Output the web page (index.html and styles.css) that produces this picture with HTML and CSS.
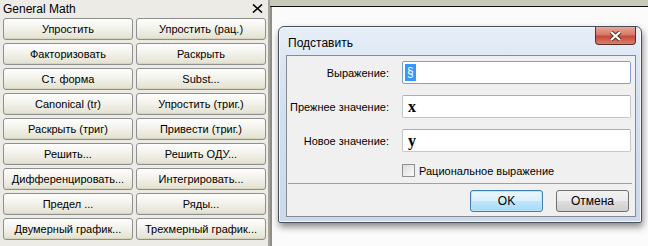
FILE: index.html
```html
<!DOCTYPE html>
<html lang="ru">
<head>
    <meta charset="UTF-8">
    <title>General Math</title>
    <link rel="stylesheet" href="styles.css">
</head>
<body>
<div class="screen">
    <div class="math">
        <div class="math-title">
            <span>General Math</span>
            <svg class="math-x" width="11" height="9" viewBox="0 0 11 9">
                <path d="M1 0.5 L10 8.5 M10 0.5 L1 8.5" stroke="#000" stroke-width="1.6"/>
            </svg>
        </div>
        <div class="grid">
            <button class="btn">Упростить</button>
            <button class="btn">Упростить (рац.)</button>
            <button class="btn">Факторизовать</button>
            <button class="btn">Раскрыть</button>
            <button class="btn">Ст. форма</button>
            <button class="btn">Subst...</button>
            <button class="btn">Canonical (tr)</button>
            <button class="btn">Упростить (триг.)</button>
            <button class="btn">Раскрыть (триг)</button>
            <button class="btn">Привести (триг.)</button>
            <button class="btn">Решить...</button>
            <button class="btn">Решить ОДУ...</button>
            <button class="btn">Дифференцировать...</button>
            <button class="btn">Интегрировать...</button>
            <button class="btn">Предел ...</button>
            <button class="btn">Ряды...</button>
            <button class="btn">Двумерный график...</button>
            <button class="btn">Трехмерный график...</button>
        </div>
    </div>
    <div class="desk">
        <div class="desk-top"></div>
        <div class="desk-body">
            <div class="dlg">
                <div class="dlg-head">
                    <span class="dlg-title">Подставить</span>
                    <span class="close">
                        <svg width="13" height="10" viewBox="0 0 13 10">
                            <path d="M2 1 L11 9 M11 1 L2 9" stroke="#5b2b24" stroke-width="4"/>
                            <path d="M2 1 L11 9 M11 1 L2 9" stroke="#fff" stroke-width="2.2"/>
                        </svg>
                    </span>
                </div>
                <div class="dlg-body">
                    <div class="form">
                        <span class="lbl">Выражение:</span>
                        <div class="field focus"><span class="sel">§</span></div>
                        <span class="lbl">Прежнее значение:</span>
                        <div class="field"><span class="val">x</span></div>
                        <span class="lbl">Новое значение:</span>
                        <div class="field"><span class="val">y</span></div>
                    </div>
                    <label class="check"><span class="box"></span>Рациональное выражение</label>
                    <div class="sep"></div>
                    <div class="actions">
                        <span class="w7btn ok">OK</span>
                        <span class="w7btn">Отмена</span>
                    </div>
                </div>
            </div>
        </div>
    </div>
</div>
</body>
</html>
```

FILE: styles.css
```css
*{
    padding: 0;
    margin: 0;
    box-sizing: border-box;
}
body{
    font-family: "Liberation Sans", Arial, sans-serif;
    font-size: 11px;
    color: #000;
    background: #fff;
}
.screen{
    width: 648px;
    height: 246px;
    display: flex;
    overflow: hidden;
}

/* left panel */
.math{
    width: 270px;
    height: 246px;
    background: #ecebe6;
    border-right: 2px solid #a4a39c;
}
.math-title{
    height: 18px;
    display: flex;
    align-items: center;
    justify-content: space-between;
    padding: 0 5px 1px 3px;
    font-size: 12px;
}
.grid{
    display: grid;
    grid-template-columns: 130px 130px;
    grid-auto-rows: 22px;
    column-gap: 3px;
    row-gap: 3px;
    padding-left: 3px;
}
.btn{
    font-family: "Liberation Sans", Arial, sans-serif;
    font-size: 11px;
    color: #000;
    border: 1px solid #8e8f8f;
    border-radius: 3px;
    background: linear-gradient(#fefefd, #f3f2ec 45%, #e3e1cf);
    box-shadow: inset 0 -1px 0 #d8d5be;
    white-space: nowrap;
}

/* right area */
.desk{
    flex: 1;
    display: flex;
    flex-direction: column;
}
.desk-top{
    height: 7px;
    background: #c9c9bc;
    border-bottom: 1px solid #111;
}
.desk-body{
    flex: 1;
    background: #fbfbfb;
    border-left: 2px solid #8e8e86;
    padding: 19px 0 0 6px;
}
.dlg{
    width: 364px;
    height: 197px;
    border: 1px solid #4b5058;
    border-radius: 6px 6px 2px 2px;
    background: linear-gradient(#e6eef8, #d3e0ef 40%, #cbd9ea);
    box-shadow: inset 0 0 0 1px #f4f8fc, 1px 4px 7px rgba(0, 0, 0, 0.45);
    padding: 0 5px 0 7px;
    display: flex;
    flex-direction: column;
}
.dlg-head{
    height: 28px;
    display: flex;
    justify-content: space-between;
    align-items: flex-start;
}
.dlg-title{
    font-size: 12px;
    padding: 9px 0 0 2px;
}
.close{
    width: 41px;
    height: 18px;
    border: 1px solid #5d2d26;
    border-top: none;
    border-radius: 0 0 4px 4px;
    background: linear-gradient(#e9a898, #d67865 45%, #c54a3a 55%, #d8806c);
    display: flex;
    align-items: center;
    justify-content: center;
}
.dlg-body{
    height: 162px;
    border: 1px solid #858a93;
    background: #f0f0f0;
    display: flex;
    flex-direction: column;
}
.form{
    display: grid;
    grid-template-columns: 102px 229px;
    grid-auto-rows: 23px;
    column-gap: 13px;
    row-gap: 11px;
    padding-top: 5px;
    align-items: center;
}
.lbl{
    text-align: right;
    font-size: 11px;
}
.field{
    height: 23px;
    background: #fff;
    border: 1px solid #c4c7cc;
    border-top-color: #abadb3;
    border-radius: 2px;
    display: flex;
    align-items: center;
    padding-left: 2px;
}
.field.focus{
    border-color: #7da2ce;
}
.sel{
    background: #3399ff;
    color: #fff;
    font-size: 12px;
    line-height: 17px;
    padding: 0 2px;
}
.val{
    font-family: "Liberation Serif", "Times New Roman", serif;
    font-weight: bold;
    font-size: 16px;
    padding-left: 3px;
}
.check{
    display: flex;
    align-items: center;
    gap: 4px;
    margin: 12px 0 0 115px;
    height: 13px;
}
.box{
    width: 13px;
    height: 13px;
    border: 1px solid #8f8f8f;
    background: linear-gradient(135deg, #dcdcdc, #fafafa);
}
.sep{
    height: 1px;
    background: #a0a0a0;
    margin: 6px 3px 0 1px;
}
.actions{
    display: flex;
    justify-content: flex-end;
    gap: 13px;
    padding: 6px 6px 0 0;
}
.w7btn{
    width: 73px;
    height: 22px;
    border: 1px solid #707070;
    border-radius: 3px;
    background: linear-gradient(#f2f2f2, #ebebeb 50%, #dddddd 51%, #cfcfcf);
    display: flex;
    align-items: center;
    justify-content: center;
    font-size: 12px;
}
.w7btn.ok{
    border-color: #3c7fb1;
    background: linear-gradient(#eaf6fd, #d9f0fc 50%, #bee6fd 51%, #a7d9f5);
    box-shadow: inset 0 0 0 1px #bfe3f7;
}
```
